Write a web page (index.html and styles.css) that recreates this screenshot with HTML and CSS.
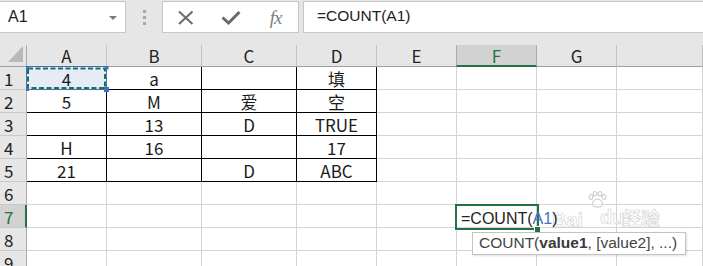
FILE: index.html
```html
<!DOCTYPE html>
<html>
<head>
<meta charset="utf-8">
<link rel="stylesheet" href="styles.css">
</head>
<body>
<div class="app">
  <div class="fbar">
    <div class="namebox"><span class="name">A1</span><i class="caret"></i></div>
    <div class="grip"><i></i><i></i><i></i></div>
    <div class="btns">
      <span class="btn"><svg width="18" height="15" viewBox="0 0 18 15"><path d="M2 1.5 L15.5 14 M15.5 1.5 L2 14" stroke="#6a6a6a" stroke-width="2" fill="none"/></svg></span>
      <span class="btn"><svg width="20" height="14" viewBox="0 0 20 14"><path d="M1.5 6.5 L7.5 12 L18.5 1" stroke="#6a6a6a" stroke-width="3" fill="none"/></svg></span>
      <span class="btn fx">fx</span>
    </div>
    <div class="finput">=COUNT(A1)</div>
  </div>

  <div class="sheet">
    <div class="corner"><svg width="26" height="21" viewBox="0 0 26 21"><polygon points="23,1 23,17 8,17" fill="#b9b9b9"/></svg></div>
    <div class="h">A</div><div class="h">B</div><div class="h">C</div><div class="h">D</div><div class="h">E</div><div class="h hs">F</div><div class="h">G</div><div class="h"></div>

    <div class="r">1</div><div class="c b"></div><div class="c b">a</div><div class="c b"></div><div class="c b">填</div><div class="c"></div><div class="c"></div><div class="c"></div><div class="c"></div>
    <div class="r">2</div><div class="c b">5</div><div class="c b">M</div><div class="c b">爱</div><div class="c b">空</div><div class="c"></div><div class="c"></div><div class="c"></div><div class="c"></div>
    <div class="r">3</div><div class="c b"></div><div class="c b">13</div><div class="c b">D</div><div class="c b">TRUE</div><div class="c"></div><div class="c"></div><div class="c"></div><div class="c"></div>
    <div class="r">4</div><div class="c b">H</div><div class="c b">16</div><div class="c b"></div><div class="c b">17</div><div class="c"></div><div class="c"></div><div class="c"></div><div class="c"></div>
    <div class="r">5</div><div class="c b">21</div><div class="c b"></div><div class="c b">D</div><div class="c b">ABC</div><div class="c"></div><div class="c"></div><div class="c"></div><div class="c"></div>
    <div class="r">6</div><div class="c"></div><div class="c"></div><div class="c"></div><div class="c"></div><div class="c"></div><div class="c"></div><div class="c"></div><div class="c"></div>
    <div class="r rs">7</div><div class="c"></div><div class="c"></div><div class="c"></div><div class="c"></div><div class="c"></div><div class="c"></div><div class="c"></div><div class="c"></div>
    <div class="r">8</div><div class="c"></div><div class="c"></div><div class="c"></div><div class="c"></div><div class="c"></div><div class="c"></div><div class="c"></div><div class="c"></div>
    <div class="r">9</div><div class="c"></div><div class="c"></div><div class="c"></div><div class="c"></div><div class="c"></div><div class="c"></div><div class="c"></div><div class="c"></div>

    <div class="refsel">
      <svg width="88" height="30" viewBox="0 0 88 30">
        <rect x="3" y="3" width="79" height="22" fill="#e6ecf7"/>
        <rect x="2.5" y="2.5" width="80" height="23" fill="none" stroke="#3f6fc8" stroke-width="1"/>
        <rect x="4" y="4.5" width="77" height="19.5" fill="none" stroke="#217346" stroke-width="2" stroke-dasharray="5 2.5"/>
        <rect x="2" y="2" width="3" height="3" fill="#3f6fc8"/>
        <rect x="81" y="2" width="3.5" height="3.5" fill="#3f6fc8"/>
        <rect x="2" y="24" width="3" height="3" fill="#3f6fc8"/>
        <rect x="80" y="23" width="5" height="5" fill="#3f6fc8"/>
      </svg>
      <span class="reftext">4</span>
    </div>

    <div class="wm">
      <svg class="paw" width="20" height="17" viewBox="0 0 20 17"><g fill="#ffffff" fill-opacity="0.6" stroke="#c4c4c4" stroke-width="1"><ellipse cx="4" cy="6" rx="2" ry="2.5"/><ellipse cx="8" cy="2.8" rx="2" ry="2.3"/><ellipse cx="13" cy="2.8" rx="2" ry="2.3"/><ellipse cx="17" cy="6" rx="2" ry="2.5"/><path d="M10.5 8 C6 8 4 14 7 15.5 C9 16.3 12 16.3 14 15.5 C17 14 15 8 10.5 8 Z"/></g></svg>
      <span class="wm1">Bai</span><span class="wm2">du</span><span class="wm3">经验</span>
    </div>

    <div class="editor"><span class="etext">=COUNT(<span class="eref">A1</span>)</span><i class="handle"></i></div>
    <div class="tip">COUNT(<b>value1</b>, [value2], ...)</div>
  </div>
</div>
</body>
</html>
```

FILE: styles.css
```css
html, body {
  margin: 0;
  padding: 0;
  background: #ffffff;
}
body {
  width: 703px;
  height: 266px;
  overflow: hidden;
  font-family: "Liberation Sans", Arial, sans-serif;
}
.app {
  width: 703px;
  height: 266px;
  overflow: hidden;
}

/* formula bar */
.fbar {
  height: 45px;
  box-sizing: border-box;
  padding-top: 1px;
  background: #e6e6e6;
  display: flex;
  align-items: flex-start;
}
.namebox {
  margin-left: -1px;
  width: 127px;
  height: 32px;
  box-sizing: border-box;
  border: 1px solid #c6c6c6;
  background: #ffffff;
  display: flex;
  align-items: center;
  justify-content: space-between;
  padding: 0 8px 0 8px;
}
.name {
  font-size: 16px;
  line-height: 28px;
  color: #222222;
}
.caret {
  width: 0;
  height: 0;
  border-left: 4px solid transparent;
  border-right: 4px solid transparent;
  border-top: 4px solid #7a7a7a;
  margin-top: 1px;
}
.grip {
  width: 36px;
  height: 32px;
  display: flex;
  flex-direction: column;
  align-items: center;
  justify-content: center;
  gap: 3px;
}
.grip i {
  display: block;
  width: 3px;
  height: 3px;
  background: #a9a9a9;
}
.btns {
  width: 137px;
  height: 32px;
  box-sizing: border-box;
  border: 1px solid #c6c6c6;
  background: #ffffff;
  display: grid;
  grid-template-columns: 45px 45px 45px;
  align-items: center;
}
.btn {
  display: flex;
  justify-content: center;
  align-items: center;
  height: 30px;
}
.fx {
  font-family: "Liberation Serif", "Times New Roman", serif;
  font-style: italic;
  font-size: 19px;
  color: #7d7d7d;
  letter-spacing: -1px;
  padding-top: 1px;
}
.finput {
  margin-left: 4px;
  flex: 1;
  margin-right: -2px;
  height: 32px;
  box-sizing: border-box;
  border: 1px solid #c6c6c6;
  background: #ffffff;
  padding-left: 13px;
  font-size: 15.5px;
  line-height: 28px;
  color: #222222;
}

/* sheet */
.sheet {
  position: relative;
  display: grid;
  grid-template-columns: 27px 80px 95px 95px 80px 80px 80px 80px 86px;
  grid-template-rows: 22px repeat(9, 23px);
  font-family: "Noto Sans CJK SC", "Liberation Sans", sans-serif;
}
.corner {
  background: #e6e6e6;
  border-right: 1px solid #ababab;
  border-bottom: 1px solid #9f9f9f;
  box-sizing: border-box;
}
.corner svg {
  display: block;
}
.h {
  background: #e6e6e6;
  border-right: 1px solid #c3c3c3;
  border-bottom: 1px solid #9f9f9f;
  box-sizing: border-box;
  text-align: center;
  font-size: 17px;
  line-height: 21px;
  color: #222222;
}
.h.hs {
  background: #d2d2d2;
  border-right-color: #ababab;
  border-left: 1px solid #ababab;
  margin-left: -1px;
  border-bottom: 2px solid #217346;
  color: #217346;
}
.r {
  background: #e6e6e6;
  border-right: 1px solid #ababab;
  border-bottom: 1px solid #c9c9c9;
  box-sizing: border-box;
  font-size: 17px;
  line-height: 20px;
  padding-top: 2px;
  padding-left: 4px;
  color: #222222;
  overflow: hidden;
}
.r.rs {
  background: #d2d2d2;
  border-right: 2px solid #217346;
  color: #217346;
}
.c {
  border-right: 1px solid #d4d4d4;
  border-bottom: 1px solid #d4d4d4;
  box-sizing: border-box;
  text-align: center;
  font-size: 17px;
  line-height: 20px;
  padding-top: 2px;
  color: #1a1a1a;
  white-space: nowrap;
  overflow: hidden;
}
.c.b {
  border-right-color: #000000;
  border-bottom-color: #000000;
}

/* referenced / copied cell A1 */
.refsel {
  position: absolute;
  left: 24px;
  top: 19px;
  width: 88px;
  height: 30px;
}
.refsel svg {
  position: absolute;
  left: 0;
  top: 0;
}
.reftext {
  position: absolute;
  left: 3px;
  top: 3px;
  width: 79px;
  text-align: center;
  font-size: 17px;
  line-height: 20px;
  padding-top: 2px;
  color: #1a1a1a;
}

/* watermark */
.wm {
  position: absolute;
  left: 550px;
  top: 145px;
  width: 120px;
  height: 40px;
  pointer-events: none;
}
.paw {
  position: absolute;
  left: 37px;
  top: 1px;
}
.wm1, .wm2, .wm3 {
  position: absolute;
  font-family: "Liberation Sans", sans-serif;
  font-weight: bold;
  color: rgba(255, 255, 255, 0.55);
  -webkit-text-stroke: 0.7px rgba(180, 180, 180, 0.6);
  font-size: 20px;
  line-height: 20px;
}
.wm1 { left: 2px; top: 20px; }
.wm2 { left: 50px; top: 17px; }
.wm3 { left: 72px; top: 18px; font-family: "Noto Sans CJK SC", sans-serif; font-size: 19px; }

/* active cell editor F7 */
.editor {
  position: absolute;
  left: 455px;
  top: 159px;
  width: 84px;
  height: 26px;
  box-sizing: border-box;
  border: 2px solid #217346;
}
.etext {
  position: absolute;
  left: 4px;
  top: 0;
  white-space: nowrap;
  font-family: "Liberation Sans", Arial, sans-serif;
  font-size: 16px;
  line-height: 22px;
  padding-top: 2px;
  color: #222222;
}
.eref {
  color: #4472c4;
}
.handle {
  position: absolute;
  right: -4px;
  bottom: -5px;
  width: 5px;
  height: 5px;
  background: #217346;
  border: 1px solid #ffffff;
}

/* tooltip */
.tip {
  position: absolute;
  left: 472px;
  top: 187px;
  width: 214px;
  height: 23px;
  box-sizing: border-box;
  border: 1px solid #c3c3c3;
  background: #ffffff;
  box-shadow: 1px 1px 2px rgba(0, 0, 0, 0.12);
  padding-left: 6px;
  font-family: "Liberation Sans", Arial, sans-serif;
  font-size: 15.5px;
  line-height: 20px;
  color: #444444;
  white-space: nowrap;
}
.tip b {
  font-weight: bold;
  color: #3a3a3a;
}
```
